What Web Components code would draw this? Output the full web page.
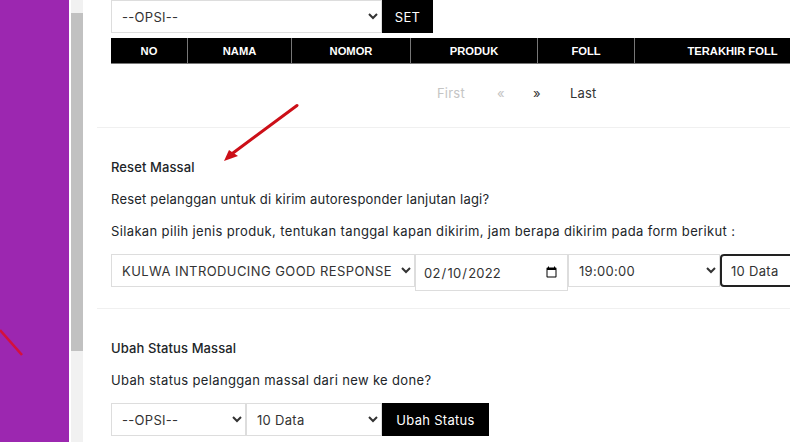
<!DOCTYPE html>
<html>
<head>
<meta charset="utf-8">
<title>Reset Massal</title>
<style>
  html, body { margin: 0; padding: 0; height: 100%; overflow: hidden; background: #fff; }
  body { font-family: "Inter", "Noto Sans", sans-serif; color: #212529; }
</style>
</head>
<body>
<app-page>
  <panel-section>
    <form-row>
      <field-select width="271" label="--OPSI--"></field-select>
      <dark-button width="51">SET</dark-button>
    </form-row>
    <data-table></data-table>
    <page-nav></page-nav>
  </panel-section>
  <panel-section>
    <section-title>Reset Massal</section-title>
    <section-text>Reset pelanggan untuk di kirim autoresponder lanjutan lagi?</section-text>
    <section-text style="letter-spacing:.36px">Silakan pilih jenis produk, tentukan tanggal kapan dikirim, jam berapa dikirim pada form berikut :</section-text>
    <form-row>
      <field-select width="304" label="KULWA INTRODUCING GOOD RESPONSE" spacing=".42px"></field-select>
      <field-date></field-date>
      <field-select width="152" label="19:00:00"></field-select>
      <field-select width="140" label="10 Data" focused></field-select>
    </form-row>
  </panel-section>
  <panel-section>
    <section-title>Ubah Status Massal</section-title>
    <section-text style="letter-spacing:.35px">Ubah status pelanggan massal dari new ke done?</section-text>
    <form-row>
      <field-select width="135" label="--OPSI--"></field-select>
      <field-select width="136" label="10 Data"></field-select>
      <dark-button width="107">Ubah Status</dark-button>
    </form-row>
  </panel-section>
</app-page>
<script>
  const define = (name, css, html, init) => {
    customElements.define(name, class extends HTMLElement {
      constructor() {
        super();
        this.attachShadow({mode: 'open'}).innerHTML = `<style>${css}</style>${html}`;
      }
      connectedCallback() {
        if (init) init(this);
      }
    });
  };

  define('app-page', `
    :host { display: grid; grid-template-columns: 69px 2px 12px 1fr; height: 442px; position: relative; overflow: hidden; }
    .rail { background: #9c27b0; }
    .gap { background: #fff; }
    .track { background: #f1f1f1; display: flex; flex-direction: column; padding-top: 13px; }
    .thumb { background: #c1c1c1; height: 338px; }
    .main { padding-left: 14px; min-width: 0; }
    svg { position: absolute; left: 0; top: 0; pointer-events: none; }
  `, `
    <div class="rail"></div><div class="gap"></div>
    <div class="track"><div class="thumb"></div></div>
    <div class="main"><slot></slot></div>
    <svg width="790" height="442" viewBox="0 0 790 442">
      <path d="M297 105.500 L233 153" stroke="#cc0f18" stroke-width="3" stroke-linecap="round" fill="none"/>
      <path d="M224 161 L229 150 L238 156 Z" fill="#cc0f18"/>
      <path d="M0 330 L22 355" stroke="#d5103c" stroke-width="2.6" fill="none"/>
    </svg>
  `);

  define('panel-section', `
    :host { display: block; box-sizing: border-box; width: 800px; padding: 0 0 0 14px; border-bottom: 1px solid #f0f0f0; }
    :host(:nth-of-type(1)) { height: 128px; }
    :host(:nth-of-type(2)) { height: 181px; padding-top: 30px; }
    :host(:nth-of-type(3)) { padding-top: 30px; border-bottom: 0; }
  `, `<slot></slot>`);

  define('section-title', `
    :host { display: block; font-size: 13px; line-height: 18px; font-weight: 500; color: #212529; margin-bottom: 14px; letter-spacing: .1px; }
  `, `<slot></slot>`);

  define('section-text', `
    :host { display: block; font-size: 13px; line-height: 18px; color: #212529; margin-bottom: 14px; letter-spacing: .2px; white-space: nowrap; }
  `, `<slot></slot>`);

  define('form-row', `
    :host { display: flex; align-items: flex-start; width: 800px; margin-top: 9px; }
    :host(:first-child) { margin-top: 0; }
  `, `<slot></slot>`);

  define('field-select', `
    :host { display: block; flex: none; }
    select {
      display: block; box-sizing: border-box; width: 100%; height: 33px; padding: 0 6px;
      font: 13px "Inter", "Noto Sans", sans-serif; letter-spacing: .3px; color: #333;
      background: #fff; border: 1px solid #ddd; border-radius: 0; outline: 0;
    }
    select.focused { border: 2px solid #222; border-radius: 4px; padding: 0 5px; }
  `, `<select><option></option></select>`, (el) => {
    el.style.width = el.getAttribute('width') + 'px';
    const sel = el.shadowRoot.querySelector('select');
    sel.options[0].textContent = el.getAttribute('label');
    if (el.hasAttribute('focused')) sel.classList.add('focused');
    if (el.hasAttribute('spacing')) sel.style.letterSpacing = el.getAttribute('spacing');
  });

  define('field-date', `
    :host { display: block; flex: none; width: 153px; }
    input {
      display: block; box-sizing: border-box; width: 100%; height: 37px; padding: 0 7px;
      font: 13px "Inter", "Noto Sans", sans-serif; letter-spacing: .2px; color: #333;
      background: #fff; border: 1px solid #ddd; border-radius: 0; outline: 0;
    }
  `, `<input type="date" value="2022-02-10">`);

  define('dark-button', `
    :host { display: flex; flex: none; box-sizing: border-box; height: 33px; align-items: center; justify-content: center; background: #000; color: #fff; font-size: 13px; letter-spacing: .3px; }
  `, `<slot></slot>`, (el) => {
    el.style.width = el.getAttribute('width') + 'px';
  });

  define('data-table', `
    :host { display: block; margin-top: 5px; }
    table { border-collapse: collapse; table-layout: fixed; width: 719px; height: 26px; background: #000; color: #fff; font: bold 11.2px "Liberation Sans", Arial, sans-serif; }
    th { padding: 0; border-right: 1px solid #777; border-bottom: 1px solid #777; text-align: center; }
    th:last-child { border-right: 0; }
  `, `
    <table><tr>
      <th style="width:76px">NO</th><th style="width:103px">NAMA</th><th style="width:118px">NOMOR</th>
      <th style="width:126px">PRODUK</th><th style="width:96px">FOLL</th><th>TERAKHIR FOLL</th>
    </tr></table>
  `);

  define('page-nav', `
    :host { display: flex; margin-top: 20px; padding-left: 326px; font-size: 13px; line-height: 18px; letter-spacing: .2px; color: #333; }
    span { display: block; flex: none; }
    .off { color: #c4c4c4; }
    .a { width: 60px; } .b { width: 36px; } .c { width: 37px; }
  `, `
    <span class="off a">First</span><span class="off b">«</span><span class="c">»</span><span>Last</span>
  `);
</script>
</body>
</html>
